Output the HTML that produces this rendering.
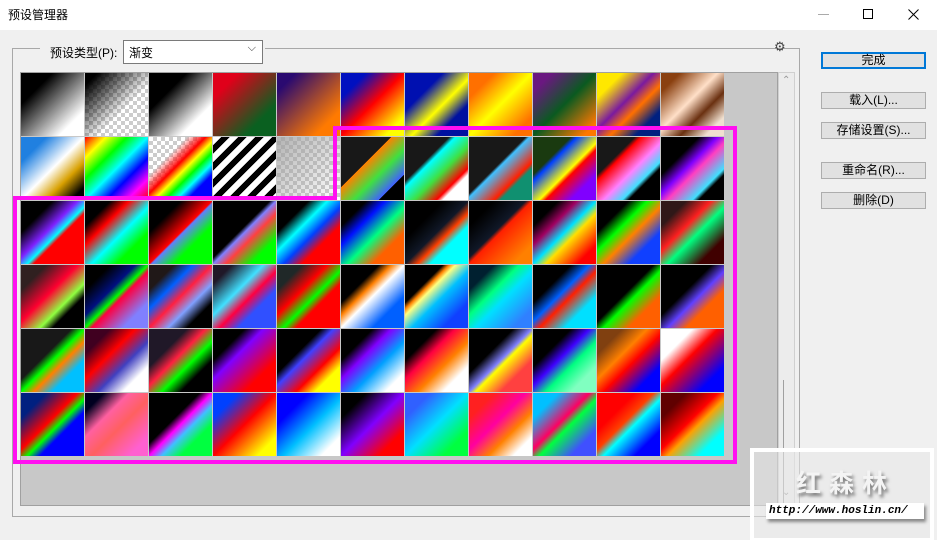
<!DOCTYPE html>
<html><head><meta charset="utf-8"><style>
*{margin:0;padding:0;box-sizing:border-box}
body{width:937px;height:540px;background:#f0f0f0;font-family:"Liberation Sans","Noto Sans CJK SC",sans-serif;font-size:12px;color:#000;position:relative;overflow:hidden}
.title{position:absolute;left:0;top:0;width:937px;height:30px;background:#fff}
.title span{position:absolute;left:8px;top:6px;font-size:12px}
.ab{position:absolute}
.grp{position:absolute;left:12px;top:48px;width:788px;height:469px;border:1px solid #a8a8a8}
.list{position:absolute;left:20px;top:72px;width:758px;height:434px;background:#c8c8c8;border:1px solid #a0a0a0}
.sb{position:absolute;left:778px;top:72px;width:17px;height:434px;background:#ececec;border:1px solid #d0d0d0}
.sw{position:absolute;width:63px;height:63px}
.btn{position:absolute;left:821px;width:105px;height:17px;background:#e1e1e1;border:1px solid #adadad;text-align:center;line-height:15px;font-size:12px}
.ck{background-color:#fff;background-image:conic-gradient(#ccc 25%,#fff 0 50%,#ccc 0 75%,#fff 0);background-size:8px 8px}
</style></head><body>
<div class="title"><span>预设管理器</span>
<div class="ab" style="left:818px;top:14px;width:11px;height:1px;background:#aaa"></div>
<div class="ab" style="left:863px;top:9px;width:10px;height:10px;border:1px solid #000"></div>
<svg class="ab" style="left:908px;top:9px" width="11" height="11"><path d="M0.5 0.5L10.5 10.5M10.5 0.5L0.5 10.5" stroke="#000" stroke-width="1"/></svg>
</div>
<div class="grp"></div>
<div class="ab" style="left:40px;top:40px;width:225px;height:25px;background:#f0f0f0"></div>
<div class="ab" style="left:50px;top:44px;">预设类型(P):</div>
<div class="ab" style="left:123px;top:40px;width:140px;height:24px;background:#fff;border:1px solid #7a7a7a;padding:3px 5px">渐变<span style="position:absolute;right:6px;top:1px;font-size:11px;color:#333">⌵</span></div>
<div class="ab" style="left:268px;top:40px;width:500px;height:20px;background:#f0f0f0"></div>
<div class="ab" style="left:268px;top:48px;width:505px;height:1px;background:#a8a8a8"></div>
<div class="ab" style="left:774px;top:39px;font-size:13px;color:#444">⚙</div>
<div class="list"></div>
<div class="sb"><div style="position:absolute;left:3px;top:2px;font-size:10px;color:#999">⌃</div><div style="position:absolute;left:3px;top:414px;font-size:10px;color:#999">⌄</div></div>
<div class="ab" style="left:783px;top:380px;width:1px;height:126px;background:#a0a0a0"></div>
<div id="g"></div>
<div class="btn" style="top:52px;border:2px solid #0078d7;line-height:13px">完成</div>
<div class="btn" style="top:92px">载入(L)...</div>
<div class="btn" style="top:122px">存储设置(S)...</div>
<div class="btn" style="top:162px">重命名(R)...</div>
<div class="btn" style="top:192px">删除(D)</div>
<svg class="ab" style="left:0;top:0" width="937" height="540"><polygon points="335,128 735,128 735,462 15,462 15,198 335,198" fill="none" stroke="#ff10f0" stroke-width="4"/>
<rect x="752" y="450" width="180" height="90" fill="rgba(232,232,232,0.55)" stroke="#fff" stroke-width="4"/></svg>
<div class="ab" style="left:796px;top:464px;font-size:25px;color:#f4f4f4;font-weight:bold;letter-spacing:8px;text-shadow:2px 3px 3px #777">红森林</div>
<div class="ab" style="left:766px;top:503px;width:158px;height:16px;background:#fff;font-family:'Liberation Mono',monospace;font-style:italic;font-weight:bold;font-size:11px;padding-left:3px;line-height:16px;box-shadow:2px 3px 3px #888">http://www.hoslin.cn/</div>
<script>
var G=[
"linear-gradient(135deg,#000 25%,#fff 80%)",
"ck|linear-gradient(135deg,#000 10%,rgba(0,0,0,0) 60%)",
"linear-gradient(135deg,#000 30%,#fff 75%)",
"linear-gradient(135deg,#e0001a 20%,#0a6020 75%)",
"linear-gradient(135deg,#2a0a70 15%,#ff7a00 80%)",
"linear-gradient(135deg,#0010c0 20%,#ff0000 50%,#ffff00 85%)",
"linear-gradient(135deg,#0010b0 30%,#ffff00 55%,#0010a0 75%)",
"linear-gradient(135deg,#ff7000 20%,#ffff00 50%,#ff7000 85%)",
"linear-gradient(135deg,#6a1880 15%,#0a5a20 50%,#ff7800 90%)",
"linear-gradient(135deg,#ffe800 20%,#7a1aa0 45%,#ff7000 60%,#002080 80%)",
"linear-gradient(135deg,#8a4010 15%,#ffe0c8 45%,#6a3010 65%,#f0e0d0 85%)",
"linear-gradient(135deg,#2080e0 20%,#fff 50%,#d8a000 70%,#000 90%)",
"linear-gradient(135deg,#f00,#ff0,#0f0,#0ff,#00f,#f0f,#f00)",
"ck|linear-gradient(135deg,rgba(255,255,255,0) 30%,#f00 45%,#ff0,#0f0,#0ff,#00f 80%)",
"repeating-linear-gradient(135deg,#fff 0 6px,#000 6px 12px)",
"ck|linear-gradient(135deg,rgba(160,160,160,.8),rgba(255,255,255,0))",
"linear-gradient(135deg,#181818 40%,#ff8000 40%,#40e040 60%,#4060ff 80%,#000 80%)",
"linear-gradient(135deg,#181818 35%,#00ffff 40%,#40e040,#ff0000 75%,#fff 80%)",
"linear-gradient(135deg,#181818 45%,#40c0ff 48%,#ff2000 70%,#109070 75%)",
"linear-gradient(135deg,#1a3a10 30%,#0040ff 35%,#ffff00 55%,#ff0000 60%,#8000ff 80%)",
"linear-gradient(135deg,#181818 30%,#ff0000 35%,#ff80ff 55%,#40e0ff 70%,#000 75%)",
"linear-gradient(135deg,#000 30%,#8000ff 45%,#ff40c0 55%,#40e0ff 75%,#000 80%)",
"linear-gradient(135deg,#000 25%,#8020ff 45%,#00ffff 55%,#ff0000 60%)",
"linear-gradient(135deg,#000 20%,#ff0000 35%,#00ffff 55%,#00ff00 75%)",
"linear-gradient(135deg,#000 25%,#ff0000 50%,#6080ff 52%,#00ff00 70%)",
"linear-gradient(135deg,#000 45%,#8080ff 50%,#ff4040 60%,#00ff00 80%)",
"linear-gradient(135deg,#000 25%,#00ffff 40%,#0040ff 55%,#ff0000 70%)",
"linear-gradient(135deg,#000 20%,#0010ff 35%,#00ff80 55%,#ff6000 75%)",
"linear-gradient(135deg,#000 30%,#101828 50%,#ff4000 60%,#00ffff 70%)",
"linear-gradient(135deg,#000 20%,#101828 45%,#ff2000 50%,#ff8000 85%)",
"linear-gradient(135deg,#000 20%,#a00060 35%,#00e0ff 50%,#ffe000 60%,#ff0000 85%)",
"linear-gradient(135deg,#000 25%,#00ff00 40%,#ff8000 55%,#1040ff 75%)",
"linear-gradient(135deg,#301818 20%,#ff2020 40%,#00ff80 55%,#400000 80%)",
"linear-gradient(135deg,#302020 20%,#ff0030 45%,#90ff40 65%,#000 75%)",
"linear-gradient(135deg,#000 20%,#001080 40%,#00ff00 50%,#ff0040 55%,#8080ff 80%)",
"linear-gradient(135deg,#201818 20%,#0060ff 35%,#ff2040 50%,#80a0ff 65%,#000 80%)",
"linear-gradient(135deg,#201828 15%,#40e0ff 40%,#ff0040 55%,#3050ff 70%)",
"linear-gradient(135deg,#202828 20%,#ff0000 40%,#00ff00 55%,#ff0000 65%)",
"linear-gradient(135deg,#000 30%,#ff8000 40%,#fff 50%,#0060ff 75%)",
"linear-gradient(135deg,#000 30%,#ff8000 35%,#ffff80 40%,#00c0ff 55%,#1040ff 80%)",
"linear-gradient(135deg,#002030 20%,#00ff80 40%,#00e0ff 55%,#3080ff 85%)",
"linear-gradient(135deg,#000 30%,#0060ff 45%,#ff2000 55%,#00e0ff 75%)",
"linear-gradient(135deg,#000 45%,#00ff00 55%,#ff6000 75%)",
"linear-gradient(135deg,#000 40%,#6040ff 55%,#ff6000 70%)",
"linear-gradient(135deg,#181818 40%,#00ff00 50%,#ff8000 60%,#00c0ff 75%)",
"linear-gradient(135deg,#400020 20%,#ff0000 40%,#4040c0 60%,#fff 80%)",
"linear-gradient(135deg,#201828 30%,#ff2040 45%,#00ff00 60%,#000 75%)",
"linear-gradient(135deg,#000 25%,#8000ff 40%,#ff0000 75%)",
"linear-gradient(135deg,#000 35%,#4040ff 45%,#ff0000 65%,#ffff00 80%)",
"linear-gradient(135deg,#000 25%,#8000ff 40%,#00a0ff 60%,#fff 85%)",
"linear-gradient(135deg,#000 25%,#ff0040 40%,#ff8000 60%,#fff 80%)",
"linear-gradient(135deg,#000 35%,#8080ff 50%,#ffff00 55%,#ff4040 75%)",
"linear-gradient(135deg,#000 30%,#4000ff 45%,#00ff80 60%,#80ffc0 80%)",
"linear-gradient(135deg,#804010 20%,#ff8000 40%,#ff0000 55%,#0000ff 80%)",
"linear-gradient(135deg,#fff 25%,#ff0000 45%,#0000ff 80%)",
"linear-gradient(135deg,#002080 20%,#ff0000 45%,#00ff00 55%,#0000ff 65%)",
"linear-gradient(135deg,#000020 15%,#ff60a0 35%,#ff6060 55%,#ff60d0 85%)",
"linear-gradient(135deg,#000 40%,#ff00ff 50%,#40c0ff 60%,#00ff40 75%)",
"linear-gradient(135deg,#0040ff 20%,#ff0000 50%,#ffff00 85%)",
"linear-gradient(135deg,#0000ff 25%,#00c0ff 55%,#fff 85%)",
"linear-gradient(135deg,#000 20%,#8000ff 50%,#ff0000 80%)",
"linear-gradient(135deg,#3060ff 20%,#00e0ff 50%,#00ff40 80%)",
"linear-gradient(135deg,#ff2020 20%,#ff00a0 45%,#ff8000 65%,#fff 85%)",
"linear-gradient(135deg,#00c0ff 20%,#ff0060 45%,#00ff40 55%,#4050ff 80%)",
"linear-gradient(135deg,#ff0000 30%,#ff4000 45%,#00ffff 55%,#0000ff 80%)",
"linear-gradient(135deg,#600000 20%,#ff0000 45%,#ffa000 55%,#00ffff 80%)"
];
var h='';
for(var i=0;i<G.length;i++){var c=i%11,r=Math.floor(i/11);var g=G[i],ck=false;if(g.indexOf('ck|')==0){ck=true;g=g.slice(3);}
h+='<div class="sw" style="left:'+(21+c*64)+'px;top:'+(73+r*64)+'px;background-color:#fff;background-image:'+g+(ck?',conic-gradient(#ccc 25%,#fff 0 50%,#ccc 0 75%,#fff 0);background-size:100% 100%,8px 8px':'')+'"></div>';}
document.getElementById('g').innerHTML=h;
</script>
</body></html>
